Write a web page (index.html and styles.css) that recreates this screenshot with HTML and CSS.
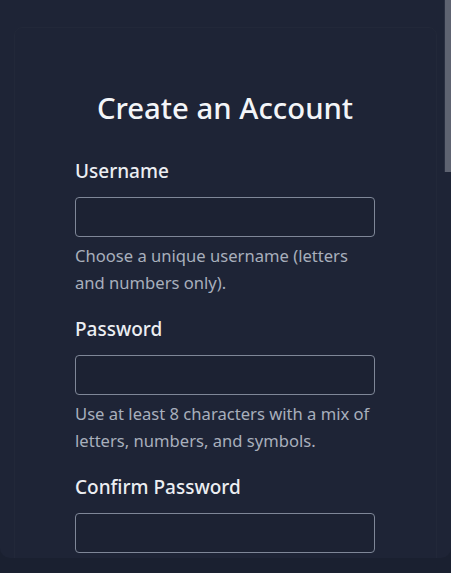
FILE: index.html
```html
<!DOCTYPE html>
<html lang="en">
<head>
<meta charset="utf-8">
<title>Create an Account</title>
<link rel="stylesheet" href="styles.css">
</head>
<body>
<div class="shell">
  <div class="frame">
    <form class="card">
      <h1 class="title">Create an Account</h1>
      <div class="field">
        <label class="label" for="username">Username</label>
        <input class="input" id="username" type="text">
        <p class="help">Choose a unique username (letters and numbers only).</p>
      </div>
      <div class="field">
        <label class="label" for="password">Password</label>
        <input class="input" id="password" type="password">
        <p class="help">Use at least 8 characters with a mix of letters, numbers, and symbols.</p>
      </div>
      <div class="field">
        <label class="label" for="confirm">Confirm Password</label>
        <input class="input" id="confirm" type="password">
        <p class="help">Re-enter your password to confirm.</p>
      </div>
      <div class="field">
        <label class="label" for="email">Email</label>
        <input class="input" id="email" type="email">
        <p class="help">We'll send a verification link to this address.</p>
      </div>
      <button class="submit" type="button">Sign Up</button>
    </form>
  </div>
  <div class="scroll-thumb"></div>
</div>
</body>
</html>
```

FILE: styles.css
```css
html, body {
  margin: 0;
  padding: 0;
  background: #1a2030;
}

.shell {
  position: relative;
}

.frame {
  height: 558px;
  overflow-y: auto;
  background: #1e2436;
  border-radius: 0 0 10px 10px;
  box-sizing: border-box;
  padding: 27px 0 0 14px;
  scrollbar-width: none;
}

.frame::-webkit-scrollbar {
  display: none;
}

.scroll-thumb {
  position: absolute;
  top: 0;
  right: 0;
  width: 6px;
  height: 172px;
  background: #5e6371;
  border-left: 1px solid #2a3042;
}

.card {
  width: 300px;
  padding: 62px 61px 900px 60px;
  background: #1e2436;
  border: 1px solid #222839;
  border-radius: 8px;
  font-family: "Noto Sans", "Open Sans", sans-serif;
  display: flex;
  flex-direction: column;
}

.title {
  margin: 0 0 32px;
  font-size: 29.3px;
  line-height: 36px;
  font-weight: 500;
  color: #f3f5f8;
  text-align: center;
}

.field {
  display: flex;
  flex-direction: column;
  margin-bottom: 20px;
}

.label {
  font-size: 19px;
  line-height: 26px;
  font-weight: 500;
  color: #eceef2;
  margin-bottom: 13px;
}

.input {
  height: 40px;
  box-sizing: border-box;
  border: 1.5px solid #7f8798;
  border-radius: 4px;
  background: #1c2233;
  color: #eceef2;
  font: inherit;
  padding: 0 10px;
}

.help {
  margin: 5px 0 0;
  font-size: 16.6px;
  line-height: 27px;
  color: #a8afbc;
}

.submit {
  height: 44px;
  border: none;
  border-radius: 4px;
  background: #3b6fd8;
  color: #fff;
  font: inherit;
  font-size: 18px;
}
```
